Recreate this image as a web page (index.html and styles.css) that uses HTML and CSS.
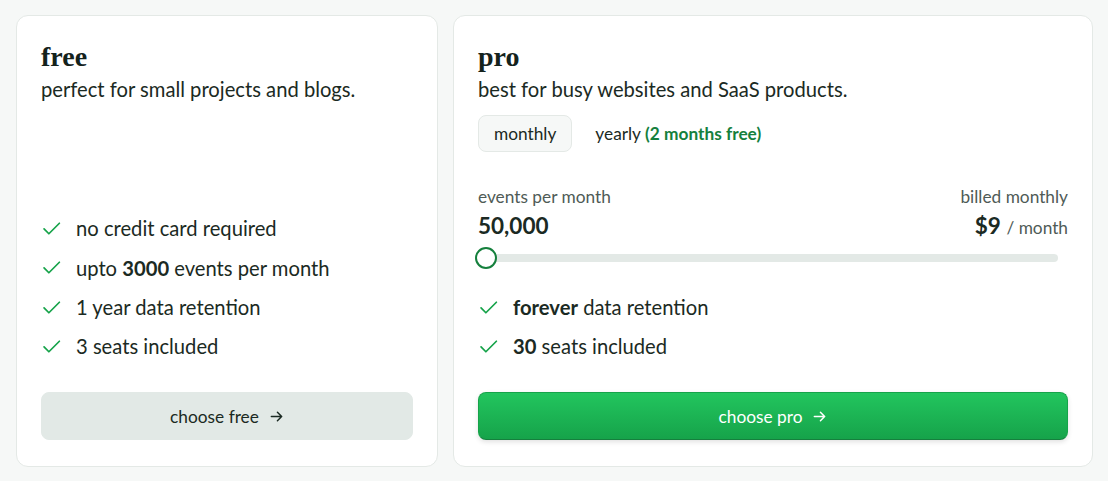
FILE: index.html
```html
<!DOCTYPE html>
<html lang="en">
<head>
<meta charset="utf-8">
<title>pricing</title>
<link rel="stylesheet" href="styles.css">
</head>
<body>
<div class="plans">
  <section class="card">
    <h2 class="plan-name">free</h2>
    <p class="plan-desc">perfect for small projects and blogs.</p>
    <ul class="features push">
      <li><svg class="check" viewBox="0 0 24 24"><path d="M3.5 12.5l5.5 5.5L21 6"/></svg><span>no credit card required</span></li>
      <li><svg class="check" viewBox="0 0 24 24"><path d="M3.5 12.5l5.5 5.5L21 6"/></svg><span>upto <b>3000</b> events per month</span></li>
      <li><svg class="check" viewBox="0 0 24 24"><path d="M3.5 12.5l5.5 5.5L21 6"/></svg><span>1 year data retention</span></li>
      <li><svg class="check" viewBox="0 0 24 24"><path d="M3.5 12.5l5.5 5.5L21 6"/></svg><span>3 seats included</span></li>
    </ul>
    <button class="btn btn-free">choose free <svg class="arrow" viewBox="0 0 16 16"><path d="M2.5 8h11M9 3.5L13.5 8 9 12.5"/></svg></button>
  </section>
  <section class="card">
    <h2 class="plan-name">pro</h2>
    <p class="plan-desc">best for busy websites and SaaS products.</p>
    <div class="toggle">
      <span class="tab active">monthly</span>
      <span class="tab">yearly <em class="save">(2 months free)</em></span>
    </div>
    <div class="meter">
      <div class="meter-col">
        <div class="label">events per month</div>
        <div class="value">50,000</div>
      </div>
      <div class="meter-col right">
        <div class="label">billed monthly</div>
        <div class="value">$9 <span class="per">/ month</span></div>
      </div>
    </div>
    <div class="slider"><div class="track"></div><div class="thumb"></div></div>
    <ul class="features">
      <li><svg class="check" viewBox="0 0 24 24"><path d="M3.5 12.5l5.5 5.5L21 6"/></svg><span><b>forever</b> data retention</span></li>
      <li><svg class="check" viewBox="0 0 24 24"><path d="M3.5 12.5l5.5 5.5L21 6"/></svg><span><b>30</b> seats included</span></li>
    </ul>
    <button class="btn btn-pro">choose pro <svg class="arrow" viewBox="0 0 16 16"><path d="M2.5 8h11M9 3.5L13.5 8 9 12.5"/></svg></button>
  </section>
</div>
</body>
</html>
```
FILE: styles.css
```css
* { box-sizing: border-box; }
html, body { margin: 0; }
body {
  background: #f6f8f7;
  font-family: "Lato", "Noto Sans", sans-serif;
  color: #1b2a23;
  padding: 15px 15px 14px 16px;
}
.plans {
  display: grid;
  grid-template-columns: 422px 1fr;
  gap: 15px;
  height: 452px;
}
.card {
  background: #fff;
  border: 1px solid #e4e9e6;
  border-radius: 12px;
  padding: 25px 24px 26px 24px;
  display: flex;
  flex-direction: column;
}
.plan-name {
  margin: 0;
  font-family: "Liberation Serif", "DejaVu Serif", serif;
  font-weight: 700;
  font-size: 28px;
  line-height: 32px;
  color: #14221c;
}
.plan-desc {
  margin: 2px 0 0;
  font-size: 20.2px;
  line-height: 28px;
}
.toggle {
  display: flex;
  align-items: center;
  gap: 9px;
  margin-top: 12px;
}
.tab {
  font-size: 17.3px;
  line-height: 21px;
  padding: 7px 13px;
  border: 1px solid transparent;
  border-radius: 8px;
}
.tab.active {
  padding: 7px 15px;
  background: #f6f8f7;
  border-color: #e4e9e6;
}
.save {
  font-style: normal;
  font-weight: 700;
  color: #15803d;
}
.meter {
  display: flex;
  justify-content: space-between;
  margin-top: 33px;
}
.meter-col.right { text-align: right; }
.label {
  font-size: 17.3px;
  line-height: 24px;
  color: #4f5b56;
}
.value {
  margin-top: 3px;
  font-size: 22.5px;
  line-height: 28px;
  font-weight: 700;
}
.per {
  font-size: 17.3px;
  font-weight: 400;
  color: #4f5b56;
}
.slider {
  position: relative;
  height: 22px;
  margin: 5px 10px 0 0;
  display: flex;
  align-items: center;
}
.track {
  flex: 1;
  height: 8px;
  border-radius: 4px;
  background: #e3e9e6;
}
.thumb {
  position: absolute;
  left: -3px;
  top: 0;
  width: 22px;
  height: 22px;
  border-radius: 50%;
  background: #fff;
  border: 2px solid #15803d;
}
.features {
  list-style: none;
  margin: 24px 0 0;
  padding: 0;
  display: flex;
  flex-direction: column;
  gap: 11.3px;
}
.features.push { margin-top: auto; }
.features li {
  display: flex;
  align-items: center;
  gap: 14px;
  font-size: 20.2px;
  line-height: 28px;
}
.features b { font-weight: 700; }
.check {
  width: 21px;
  height: 21px;
  fill: none;
  stroke: #16a34a;
  stroke-width: 2;
  stroke-linecap: round;
  stroke-linejoin: round;
}
.btn {
  margin-top: 32px;
  height: 48px;
  flex-shrink: 0;
  border-radius: 8px;
  font-family: inherit;
  font-size: 17.3px;
  display: flex;
  align-items: center;
  justify-content: center;
  gap: 10px;
  cursor: pointer;
}
.arrow {
  width: 15px;
  height: 15px;
  fill: none;
  stroke: currentColor;
  stroke-width: 1.6;
  stroke-linecap: round;
  stroke-linejoin: round;
}
.btn-free {
  background: #e2e9e6;
  border: 1px solid #e2e9e6;
  color: #1b2a23;
}
.btn-pro {
  background: linear-gradient(#22c55e, #16a34a);
  border: 1px solid #16a34a;
  border-bottom-color: #15803d;
  color: #fff;
  box-shadow: 0 2px 5px rgba(0, 0, 0, 0.12);
}
```
